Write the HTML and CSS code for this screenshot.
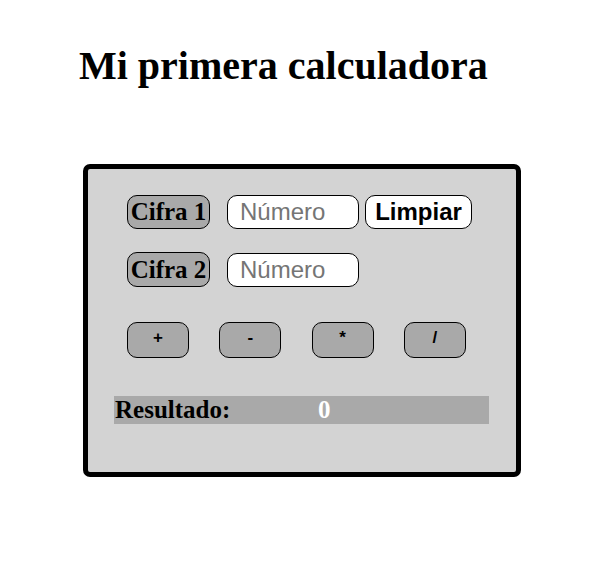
FILE: index.html
```html
<!DOCTYPE html>
<html lang="es">
<head>
<meta charset="utf-8">
<title>Mi primera calculadora</title>
<link rel="stylesheet" href="styles.css">
</head>
<body>
<h1 class="title">Mi primera calculadora</h1>
<div class="calc">
  <div class="row">
    <label class="tag" for="n1">Cifra 1</label>
    <input class="num" id="n1" type="text" placeholder="Número">
    <button class="clear" type="button">Limpiar</button>
  </div>
  <div class="row row2">
    <label class="tag" for="n2">Cifra 2</label>
    <input class="num" id="n2" type="text" placeholder="Número">
  </div>
  <div class="ops">
    <button class="op" type="button">+</button>
    <button class="op" type="button">-</button>
    <button class="op" type="button">*</button>
    <button class="op" type="button">/</button>
  </div>
  <div class="result">
    <span class="result-label">Resultado:</span>
    <span class="result-value">0</span>
  </div>
</div>
</body>
</html>
```
FILE: styles.css
```css
html, body {
  margin: 0;
  padding: 0;
  background: #ffffff;
}
body {
  font-family: "Liberation Serif", "Times New Roman", serif;
  color: #000;
}
.title {
  font-family: "Liberation Serif", "Times New Roman", serif;
  font-size: 40px;
  font-weight: bold;
  line-height: 44px;
  margin: 44px 0 0 79px;
}
.calc {
  box-sizing: border-box;
  width: 438px;
  height: 313px;
  margin: 76px 0 0 83px;
  border: 5px solid #000;
  border-radius: 7px;
  background: #d3d3d3;
  padding: 26px 0 0 39px;
}
.row {
  display: flex;
  align-items: center;
  height: 34px;
}
.row2 {
  margin-top: 23px;
  height: 35px;
}
.tag {
  box-sizing: border-box;
  width: 83px;
  height: 100%;
  display: flex;
  align-items: center;
  justify-content: center;
  background: #a9a9a9;
  border: 1px solid #000;
  border-radius: 10px;
  font-family: "Liberation Serif", "Times New Roman", serif;
  font-weight: bold;
  font-size: 25px;
  white-space: nowrap;
}
.num {
  box-sizing: border-box;
  width: 132px;
  height: 34px;
  margin-left: 17px;
  padding: 0 12px;
  background: #fff;
  border: 1px solid #000;
  border-radius: 10px;
  font-family: "Liberation Sans", Arial, sans-serif;
  font-size: 24px;
  outline: none;
}
.num::placeholder {
  color: #757575;
}
.clear {
  box-sizing: border-box;
  width: 107px;
  height: 34px;
  margin-left: 6px;
  padding: 0;
  background: #fff;
  border: 1px solid #000;
  border-radius: 10px;
  font-family: "Liberation Sans", Arial, sans-serif;
  font-weight: bold;
  font-size: 24px;
  color: #000;
}
.ops {
  display: flex;
  gap: 30.3px;
  margin-top: 35px;
}
.op {
  box-sizing: border-box;
  width: 62px;
  height: 36px;
  padding: 0 0 4px;
  background: #a9a9a9;
  border: 1px solid #000;
  border-radius: 10px;
  font-family: "Liberation Sans", Arial, sans-serif;
  font-weight: bold;
  font-size: 17px;
  color: #000;
}
.result {
  display: flex;
  align-items: center;
  width: 375px;
  height: 28px;
  margin: 38px 0 0 -13px;
  background: #a9a9a9;
  font-family: "Liberation Serif", "Times New Roman", serif;
  font-weight: bold;
  font-size: 25px;
}
.result-label {
  padding-left: 1px;
  width: 203px;
}
.result-value {
  color: #fff;
}
```
